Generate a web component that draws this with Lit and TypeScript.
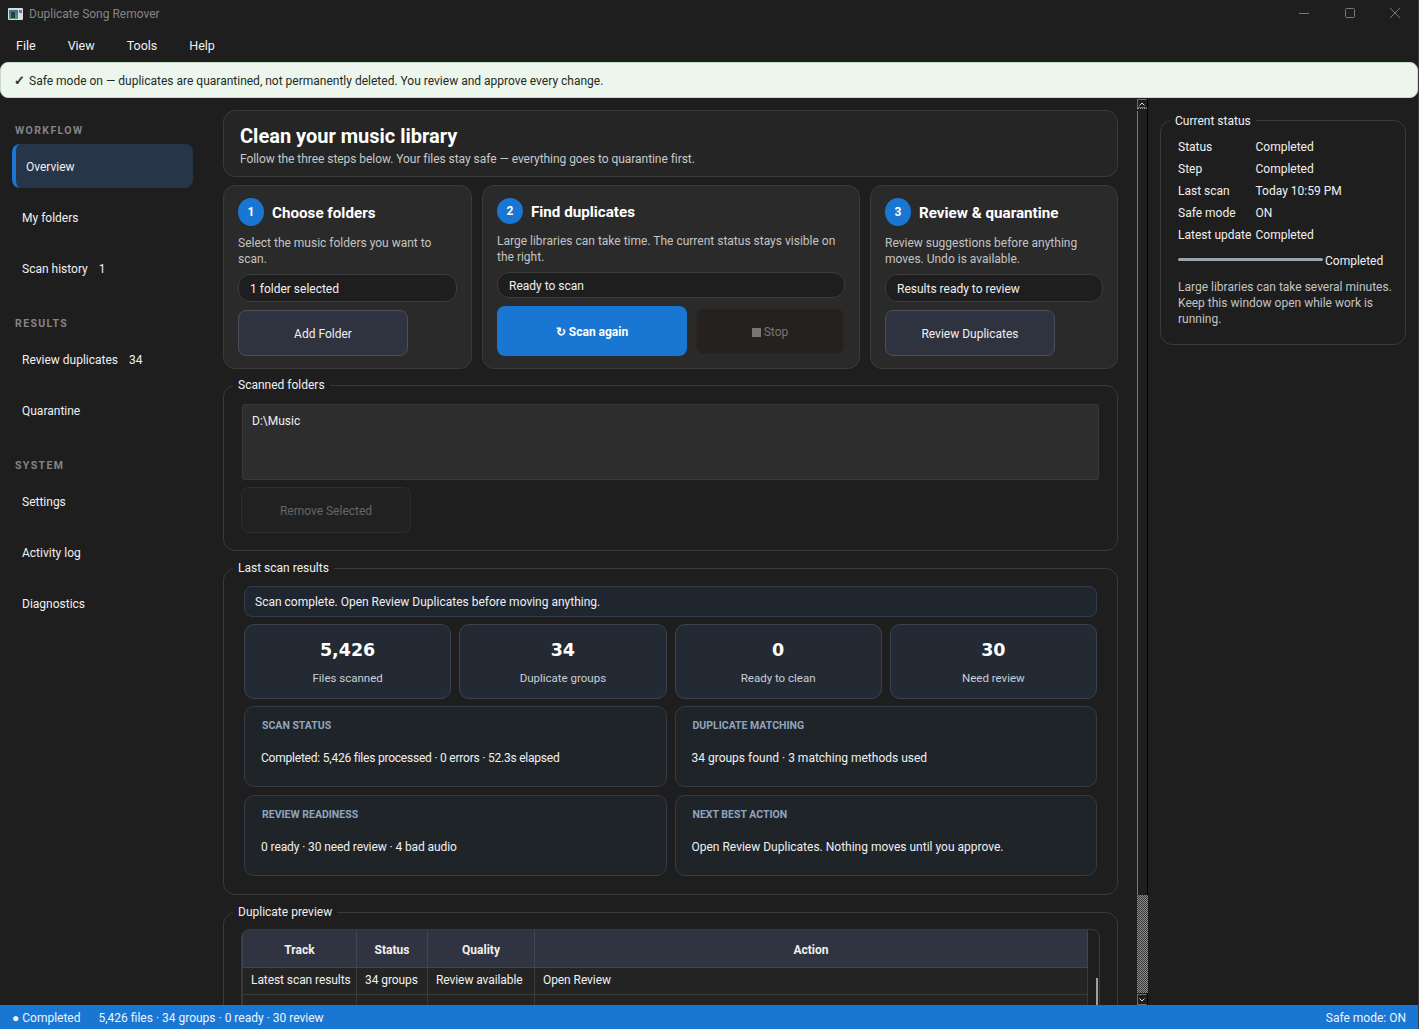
import { LitElement, html, css, nothing } from 'lit';
import { customElement } from 'lit/decorators.js';

const nav = [
  { heading: 'WORKFLOW', items: [{ label: 'Overview', active: true }, { label: 'My folders' }, { label: 'Scan history', count: '1' }] },
  { heading: 'RESULTS', items: [{ label: 'Review duplicates', count: '34' }, { label: 'Quarantine' }] },
  { heading: 'SYSTEM', items: [{ label: 'Settings' }, { label: 'Activity log' }, { label: 'Diagnostics' }] },
];

const stats = [
  ['5,426', 'Files scanned'],
  ['34', 'Duplicate groups'],
  ['0', 'Ready to clean'],
  ['30', 'Need review'],
];

const details = [
  ['SCAN STATUS', 'Completed: 5,426 files processed · 0 errors · 52.3s elapsed'],
  ['DUPLICATE MATCHING', '34 groups found · 3 matching methods used'],
  ['REVIEW READINESS', '0 ready · 30 need review · 4 bad audio'],
  ['NEXT BEST ACTION', 'Open Review Duplicates. Nothing moves until you approve.'],
];

const statusRows = [
  ['Status', 'Completed'],
  ['Step', 'Completed'],
  ['Last scan', 'Today 10:59 PM'],
  ['Safe mode', 'ON'],
  ['Latest update', 'Completed'],
];

@customElement('app-root')
export class AppRoot extends LitElement {
  static styles = css`
    :host {
      display: flex;
      flex-direction: column;
      box-sizing: border-box;
      width: 1419px;
      height: 1029px;
      overflow: hidden;
      background: #1e1e1e;
      border-right: 1px solid #3a3a3a;
      color: #f0f0f0;
      font-family: Roboto, sans-serif;
      font-size: 12px;
      line-height: 16px;
    }

    .titlebar {
      display: flex;
      align-items: center;
      height: 28px;
      flex: none;
      padding-left: 8px;
      color: #858585;
    }
    .app-icon { margin-right: 6px; }
    .title { flex: 1; }
    .winbtn { display: flex; width: 45.5px; justify-content: center; }
    .winbtns { display: flex; padding: 0 0 2px 0; }

    .menubar {
      display: flex;
      flex: none;
      height: 34px;
      align-items: center;
      padding: 1px 0 0 16px;
      box-sizing: border-box;
    }
    .menubar span { font-size: 12.5px; margin-right: 32px; }

    .banner {
      flex: none;
      height: 36px;
      box-sizing: border-box;
      display: flex;
      align-items: center;
      padding: 2px 0 0 13px;
      gap: 4px;
      background: #edf6ed;
      border: 1px solid #c6dcc6;
      border-radius: 8px;
      color: #1d2b1d;
    }
    .check {
      font-family: 'DejaVu Sans', sans-serif;
      font-size: 13px;
      width: 11px;
      -webkit-text-stroke: 0.5px #1d2b1d;
    }

    .body { display: flex; flex: 1; min-height: 0; }

    .sidebar {
      width: 181px;
      flex: none;
      padding: 25px 12px 0 12px;
    }
    .nav-heading {
      font-size: 10.5px;
      font-weight: 700;
      letter-spacing: 1.4px;
      color: #858585;
      height: 14px;
      line-height: 16px;
      padding-left: 3px;
      margin-bottom: 1px;
    }
    .nav-group { display: flex; flex-direction: column; gap: 7px; margin-bottom: 25px; }
    .nav-item {
      display: flex;
      align-items: center;
      gap: 11px;
      height: 44px;
      padding-left: 10px;
      box-sizing: border-box;
    }
    .nav-item.active {
      margin: -1px 0 1px;
      background: #263548;
      border-left: 4px solid #1976d2;
      border-radius: 8px;
      padding: 2px 0 0 10px;
    }

    .main-col {
      width: 895px;
      flex: none;
      margin-left: 18px;
      padding-top: 12px;
      display: flex;
      flex-direction: column;
      min-height: 0;
      overflow: hidden;
    }

    .hero {
      background: #252525;
      border: 1px solid #3a3a3a;
      border-radius: 12px;
      padding: 12px 16px 10px;
      height: 67px;
      box-sizing: border-box;
      flex: none;
    }
    .hero h1 { margin: 0; font-size: 20px; line-height: 26px; font-weight: 700; color: #fff; }
    .hero p { margin: 2px 0 0; color: #c8c8c8; letter-spacing: -0.05px; }

    .steps {
      display: grid;
      grid-template-columns: 249px 378px 248px;
      gap: 10px;
      margin-top: 8px;
      flex: none;
    }
    .step {
      background: #2a2a2a;
      border: 1px solid #3a3a3a;
      border-radius: 12px;
      height: 184px;
      box-sizing: border-box;
      padding: 12px 14px 0;
    }
    .step-head { display: flex; align-items: center; gap: 8px; height: 28px; }
    .step.mid .step-head { height: 26px; }
    .badge {
      width: 26px;
      height: 28px;
      border-radius: 50%;
      background: #1976d2;
      color: #fff;
      font-weight: 700;
      display: flex;
      align-items: center;
      justify-content: center;
    }
    .step.mid .badge { height: 26px; }
    .step-head h2 { margin: 0; padding-top: 2px; font-size: 15.2px; font-weight: 700; color: #fff; }
    .step p { margin: 9px 0 0; color: #c4c4c4; }
    .pill {
      margin-top: 7px;
      height: 28px;
      box-sizing: border-box;
      background: #1e1e1e;
      border: 1px solid #3c3c3c;
      border-radius: 12px;
      padding: 2px 0 0 11px;
      display: flex;
      align-items: center;
    }
    .step.mid .pill { height: 26px; }
    .btn {
      width: 170px;
      height: 46px;
      margin-top: 8px;
      padding-top: 2px;
      box-sizing: border-box;
      background: #2f3340;
      border: 1px solid #4a4f5c;
      border-radius: 8px;
      display: flex;
      align-items: center;
      justify-content: center;
    }
    .actions { display: flex; gap: 9px; margin-top: 8px; align-items: center; }
    .btn.primary {
      width: 190px;
      height: 50px;
      margin: 0;
      gap: 3px;
      background: #1976d2;
      border: none;
      color: #fff;
      font-weight: 700;
    }
    .btn.stop {
      width: 148px;
      margin: 0;
      gap: 3px;
      background: #25211e;
      border: 1px dotted #322d29;
      color: #777;
    }
    .square { width: 9px; height: 9px; background: #777; }

    fieldset {
      margin: 9px 0 0;
      padding: 0;
      border: 1px solid #3a3a3a;
      border-radius: 12px;
      flex: none;
      min-width: 0;
    }
    .steps + fieldset { margin-top: 8px; }
    legend { margin-left: 9px; padding: 0 5px; line-height: 16px; color: #f0f0f0; }

    .folders { padding: 11px 18px 17px; height: 157px; box-sizing: border-box; }
    .list {
      height: 76px;
      box-sizing: border-box;
      background: #2d2d2d;
      border: 1px solid #3a3a3a;
      border-radius: 3px;
      padding: 8px 9px;
    }
    .btn.disabled {
      margin: 7px 0 0 -1px;
      background: #212121;
      border: 1px dotted #3a3a3a;
      color: #666;
    }

    .results-box { padding: 10px 20px 18px; display: flex; flex-direction: column; gap: 7px; }
    .info {
      height: 31px;
      box-sizing: border-box;
      background: #1f2630;
      border: 1px solid #333d4a;
      border-radius: 8px;
      padding-left: 10px;
      display: flex;
      align-items: center;
    }
    .stats { display: grid; grid-template-columns: repeat(4, 1fr); gap: 8px; }
    .stat {
      height: 75px;
      box-sizing: border-box;
      background: #232a33;
      border: 1px solid #3a4350;
      border-radius: 10px;
      text-align: center;
      padding-top: 12px;
    }
    .stat b { display: block; font-family: 'DejaVu Sans', sans-serif; font-size: 17.5px; line-height: 26px; color: #fff; }
    .stat span { display: block; margin-top: 7px; font-size: 11.5px; color: #c8d0d8; }
    .detail-grid { display: grid; grid-template-columns: 1fr 1fr; gap: 8px; }
    .detail {
      height: 81px;
      box-sizing: border-box;
      background: #1f2429;
      border: 1px solid #333b47;
      border-radius: 10px;
      padding: 12px 16px;
    }
    .detail h3 { margin: 0 0 0 1px; font-size: 10.5px; line-height: 14px; font-weight: 700; color: #8fa4bf; }
    .detail div { margin-top: 17px; }
    .detail:first-child div { letter-spacing: -0.22px; }
    .detail:nth-child(3) div { letter-spacing: -0.1px; }

    .preview { padding: 9px 17px 0; }
    .table-wrap {
      display: flex;
      border: 1px solid #3a3a3a;
      border-radius: 8px 8px 0 0;
      width: 859px;
      box-sizing: border-box;
      overflow: hidden;
    }
    table { border-collapse: collapse; table-layout: fixed; width: 846px; flex: none; }
    th {
      background: #2f3440;
      font-weight: 700;
      height: 37px;
      box-sizing: border-box;
      padding: 4px 0 0;
      border: 1px solid #3f4552;
      border-top: none;
      color: #f0f0f0;
    }
    td {
      height: 27px;
      box-sizing: border-box;
      padding: 0 8px 2px;
      border: 1px solid #3a3a3a;
      background: #242424;
      white-space: nowrap;
      letter-spacing: -0.08px;
    }
    .table-scroll { flex: 1; padding: 48px 0 0 8px; }
    .table-scroll i { display: block; width: 2px; height: 40px; background: #a0a0a0; }

    .scrollbar {
      width: 11px;
      flex: none;
      margin-left: 19px;
      margin-top: 1px;
      display: flex;
      flex-direction: column;
      box-sizing: border-box;
      border-right: 1px solid #000;
    }
    .sb-btn {
      height: 9px;
      flex: none;
      box-sizing: border-box;
      border: 1px solid #6e6e6e;
      border-right-color: #222;
      width: 10px;
      display: flex;
      align-items: center;
      justify-content: center;
    }
    .sb-gap { height: 2px; flex: none; border-top: 1px dotted #999; width: 10px; }
    .sb-btn.down { height: 11px; margin-top: 1px; }
    .sb-track {
      flex: 1;
      border-left: 1px solid #777;
    }
    .sb-thumb {
      height: 98px;
      flex: none;
      margin-right: -1px;
      background: repeating-conic-gradient(#8a8a8a 0 25%, #3a3a3a 0 50%) 0 0 / 2px 2px;
    }

    .side-panel { width: 246px; flex: none; margin-left: 12px; padding-top: 13px; }
    .side-panel fieldset { margin: 0; height: 234px; padding: 10px 12px 0 17px; box-sizing: border-box; }
    .side-panel legend { margin-left: -8px; padding-top: 2px; }
    .kv { display: grid; grid-template-columns: 77.5px 1fr; row-gap: 6px; }
    .progress-row { display: flex; align-items: center; gap: 2px; margin-top: 10px; }
    .progress { width: 145px; height: 3px; border-radius: 2px; background: #9aa5ad; margin-top: -3px; }
    .note { margin: 10px 0 0; color: #c4c4c4; }

    .statusbar {
      flex: none;
      height: 24px;
      box-sizing: border-box;
      padding: 1px 12px 0 12px;
      background: #1976d2;
      color: #eef5fc;
      display: flex;
      align-items: center;
    }
    .statusbar .left { flex: 1; display: flex; gap: 18px; }
  `;

  private renderNav() {
    return nav.map(
      (g) => html`
        <div class="nav-group">
          <div class="nav-heading">${g.heading}</div>
          ${g.items.map(
            (it: any) => html`
              <div class="nav-item ${it.active ? 'active' : ''}">
                <span>${it.label}</span>
                ${it.count ? html`<span>${it.count}</span>` : nothing}
              </div>
            `
          )}
        </div>
      `
    );
  }

  render() {
    return html`
      <div class="titlebar">
        <svg class="app-icon" width="15" height="12" viewBox="0 0 15 12">
          <defs>
            <linearGradient id="pane" x1="0" y1="0" x2="0" y2="1">
              <stop offset="0" stop-color="#3a6f92" />
              <stop offset="1" stop-color="#4f9c7c" />
            </linearGradient>
          </defs>
          <rect width="15" height="12" rx="1" fill="#dcdcdc" />
          <rect x="1" y="2" width="9" height="9" fill="url(#pane)" />
          <rect x="3" y="4" width="4" height="6" fill="#2c3a46" />
          <rect x="11" y="2" width="3" height="3" fill="#6f7880" />
        </svg>
        <span class="title">Duplicate Song Remover</span>
        <div class="winbtns">
          <div class="winbtn">
            <svg width="10" height="10" viewBox="0 0 10 10"><path d="M0 5.5H10" stroke="#777" /></svg>
          </div>
          <div class="winbtn">
            <svg width="10" height="10" viewBox="0 0 10 10"><rect x=".5" y=".5" width="9" height="9" rx="1" fill="none" stroke="#777" /></svg>
          </div>
          <div class="winbtn">
            <svg width="10" height="10" viewBox="0 0 10 10"><path d="M0 0L10 10M10 0L0 10" stroke="#777" /></svg>
          </div>
        </div>
      </div>
      <div class="menubar">
        <span>File</span><span>View</span><span>Tools</span><span>Help</span>
      </div>
      <div class="banner"><span class="check">✓</span><span>Safe mode on — duplicates are quarantined, not permanently deleted. You review and approve every change.</span></div>

      <div class="body">
        <div class="sidebar">${this.renderNav()}</div>

        <div class="main-col">
          <div class="hero">
            <h1>Clean your music library</h1>
            <p>Follow the three steps below. Your files stay safe — everything goes to quarantine first.</p>
          </div>

          <div class="steps">
            <div class="step">
              <div class="step-head"><div class="badge">1</div><h2>Choose folders</h2></div>
              <p>Select the music folders you want to scan.</p>
              <div class="pill">1 folder selected</div>
              <div class="btn">Add Folder</div>
            </div>
            <div class="step mid">
              <div class="step-head"><div class="badge">2</div><h2>Find duplicates</h2></div>
              <p>Large libraries can take time. The current status stays visible on the right.</p>
              <div class="pill">Ready to scan</div>
              <div class="actions">
                <div class="btn primary"><span>↻</span><span>Scan again</span></div>
                <div class="btn stop"><span class="square"></span><span>Stop</span></div>
              </div>
            </div>
            <div class="step">
              <div class="step-head"><div class="badge">3</div><h2>Review &amp; quarantine</h2></div>
              <p>Review suggestions before anything moves. Undo is available.</p>
              <div class="pill">Results ready to review</div>
              <div class="btn">Review Duplicates</div>
            </div>
          </div>

          <fieldset>
            <legend>Scanned folders</legend>
            <div class="folders">
              <div class="list">D:\\Music</div>
              <div class="btn disabled">Remove Selected</div>
            </div>
          </fieldset>

          <fieldset>
            <legend>Last scan results</legend>
            <div class="results-box">
              <div class="info">Scan complete. Open Review Duplicates before moving anything.</div>
              <div class="stats">
                ${stats.map((s) => html`<div class="stat"><b>${s[0]}</b><span>${s[1]}</span></div>`)}
              </div>
              <div class="detail-grid">
                ${details.map((d) => html`<div class="detail"><h3>${d[0]}</h3><div>${d[1]}</div></div>`)}
              </div>
            </div>
          </fieldset>

          <fieldset>
            <legend>Duplicate preview</legend>
            <div class="preview">
              <div class="table-wrap">
                <table>
                  <colgroup><col style="width:114px" /><col style="width:71px" /><col style="width:107px" /><col /></colgroup>
                  <tr><th>Track</th><th>Status</th><th>Quality</th><th>Action</th></tr>
                  <tr><td>Latest scan results</td><td>34 groups</td><td>Review available</td><td>Open Review</td></tr>
                  <tr><td></td><td></td><td></td><td></td></tr>
                </table>
                <div class="table-scroll"><i></i></div>
              </div>
            </div>
          </fieldset>
        </div>

        <div class="scrollbar">
          <div class="sb-btn"><svg width="6" height="4" viewBox="0 0 6 4"><path d="M.5 3.5L3 1l2.5 2.5" fill="none" stroke="#ddd" /></svg></div>
          <div class="sb-gap"></div>
          <div class="sb-track"></div>
          <div class="sb-thumb"></div>
          <div class="sb-btn down"><svg width="6" height="4" viewBox="0 0 6 4"><path d="M.5 .5L3 3l2.5-2.5" fill="none" stroke="#ddd" /></svg></div>
        </div>

        <div class="side-panel">
          <fieldset>
            <legend>Current status</legend>
            <div class="kv">
              ${statusRows.map((r) => html`<span>${r[0]}</span><span>${r[1]}</span>`)}
            </div>
            <div class="progress-row"><div class="progress"></div><span>Completed</span></div>
            <p class="note">Large libraries can take several minutes. Keep this window open while work is running.</p>
          </fieldset>
        </div>
      </div>

      <div class="statusbar">
        <div class="left"><span>● Completed</span><span>5,426 files · 34 groups · 0 ready · 30 review</span></div>
        <span>Safe mode: ON</span>
      </div>
    `;
  }
}
